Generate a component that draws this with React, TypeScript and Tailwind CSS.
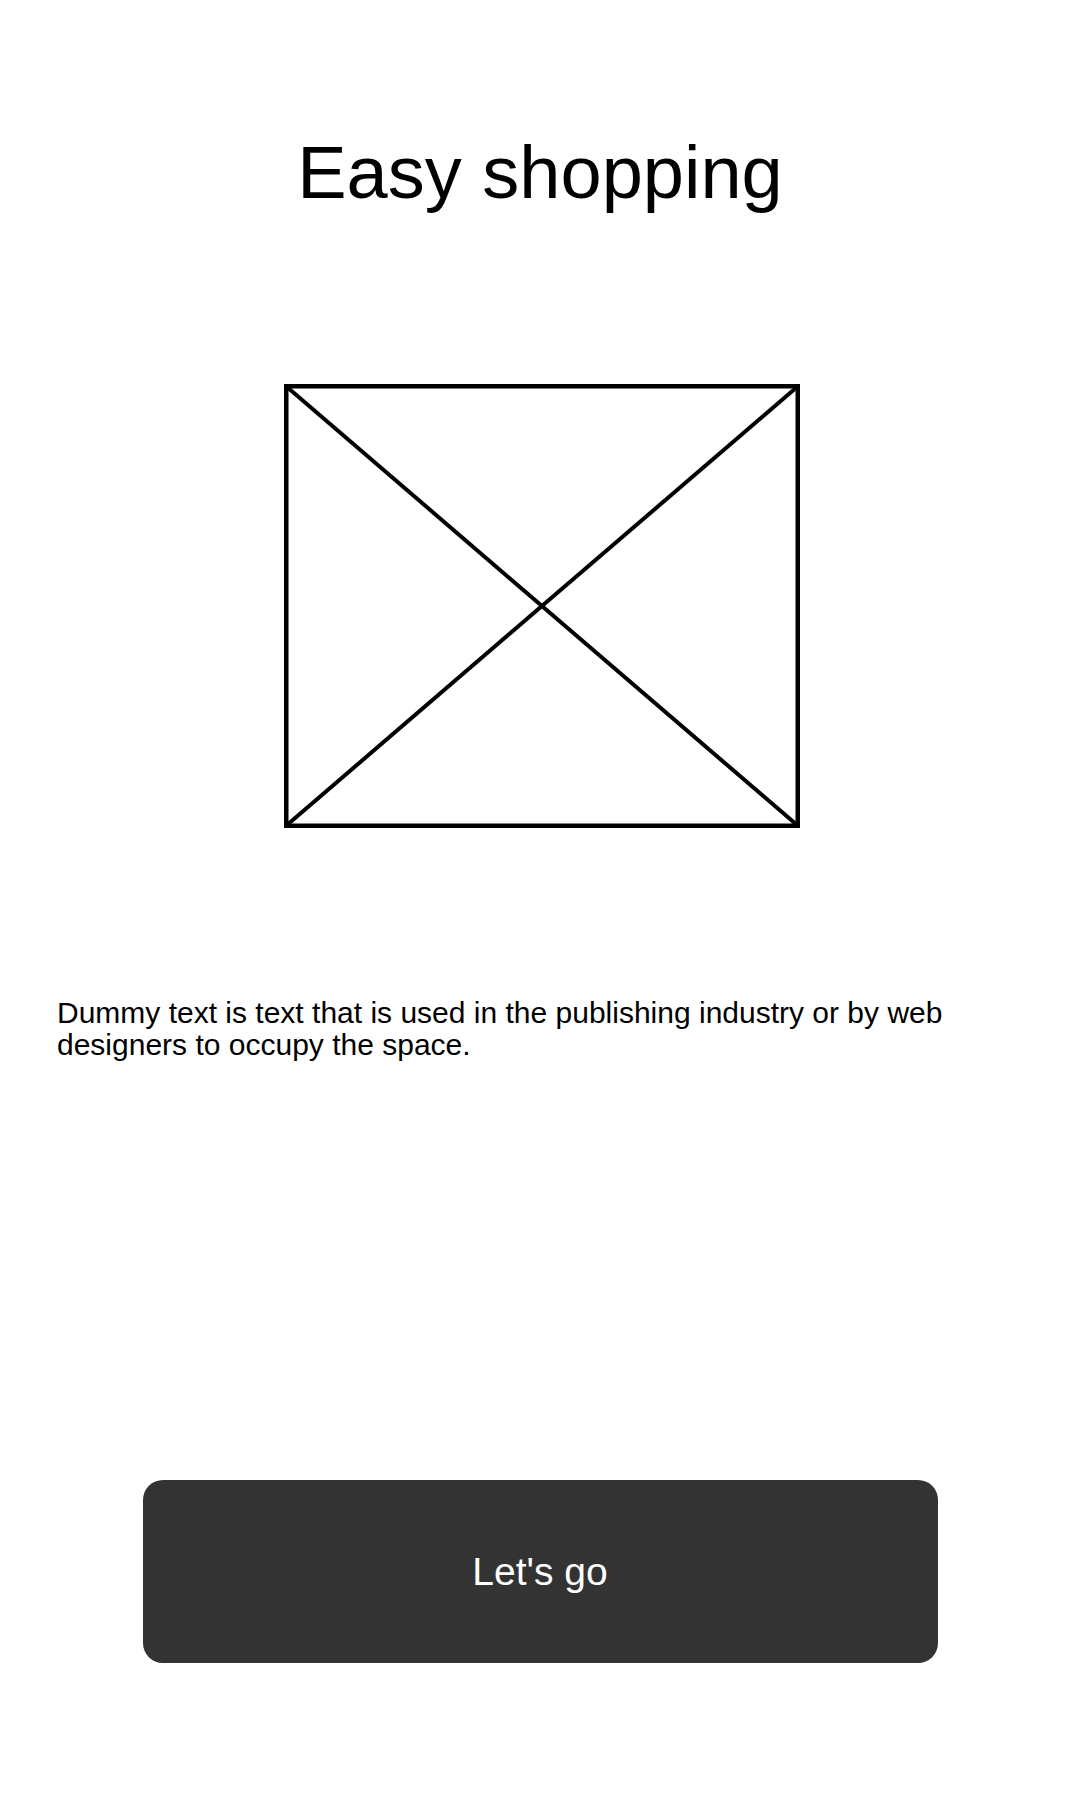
import React from "react";

export default function App() {
  return (
    <div
      className="w-[1080px] h-[1800px] bg-white flex flex-col items-center"
      style={{ fontFamily: '"Liberation Sans", Arial, sans-serif' }}
    >
      <h1 className="pt-[130px] h-[215px] text-[74px] leading-[85px] font-normal text-black">
        Easy shopping
      </h1>
      <div className="mt-[169px] ml-[4px] w-[516px] h-[444px]">
        <svg width="516" height="444" viewBox="0 0 516 444" fill="none">
          <rect x="2.25" y="2.25" width="511.5" height="439.5" stroke="black" strokeWidth="4.5" />
          <line x1="3" y1="3" x2="513" y2="441" stroke="black" strokeWidth="4" />
          <line x1="513" y1="3" x2="3" y2="441" stroke="black" strokeWidth="4" />
        </svg>
      </div>
      <p className="mt-[169px] self-stretch pl-[57px] pr-[57px] text-[30px] leading-[32px] text-black">
        Dummy text is text that is used in the publishing industry or by web designers to occupy the space.
      </p>
      <button className="mt-[419px] w-[795px] h-[183px] rounded-[20px] bg-[#333333] text-white text-[39px] leading-none flex items-center justify-center">
        Let's go
      </button>
    </div>
  );
}
